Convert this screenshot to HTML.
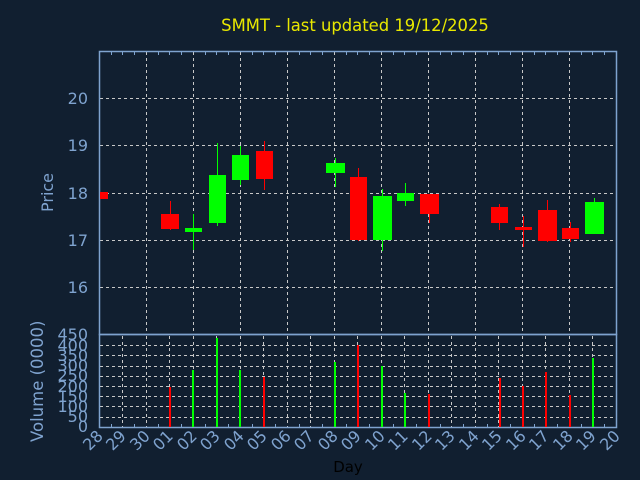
<!DOCTYPE html><html><head><style>body{margin:0;background:#111f30}svg{display:block}text{font-family:"DejaVu Sans","Liberation Sans",sans-serif}</style></head><body>
<svg width="640" height="480" xmlns="http://www.w3.org/2000/svg">
<rect width="640" height="480" fill="#111f30"/>
<text x="355" y="31" fill="#e8e800" font-size="16.4" text-anchor="middle">SMMT - last updated 19/12/2025</text>
<g stroke="#c8c8c8" stroke-dasharray="3,3" stroke-width="1">
<path d="M146.5 52V334M193.5 52V334M240.5 52V334M287.5 52V334M334.5 52V334M381.5 52V334M428.5 52V334M475.5 52V334M522.5 52V334M569.5 52V334"/>
<path d="M100 98.5H616M100 145.5H616M100 193.5H616M100 240.5H616M100 287.5H616"/>
<path d="M122.5 336V427M146.5 336V427M169.5 336V427M193.5 336V427M216.5 336V427M240.5 336V427M263.5 336V427M287.5 336V427M310.5 336V427M334.5 336V427M357.5 336V427M381.5 336V427M404.5 336V427M428.5 336V427M451.5 336V427M475.5 336V427M498.5 336V427M522.5 336V427M545.5 336V427M569.5 336V427M592.5 336V427"/>
<path d="M100 345.5H616M100 355.5H616M100 366.5H616M100 376.5H616M100 386.5H616M100 396.5H616M100 406.5H616M100 417.5H616"/>
</g>
<g stroke="#7fa3cf" fill="none" stroke-width="1.5">
<rect x="99.5" y="51.5" width="517" height="283"/>
<rect x="99.5" y="334.5" width="517" height="93"/>
</g>
<g stroke="#7fa3cf" stroke-width="1">
<path d="M111.5 52v3M122.5 52v3M134.5 52v3M158.5 52v3M169.5 52v3M181.5 52v3M205.5 52v3M216.5 52v3M228.5 52v3M252.5 52v3M263.5 52v3M275.5 52v3M299.5 52v3M310.5 52v3M322.5 52v3M346.5 52v3M357.5 52v3M369.5 52v3M393.5 52v3M404.5 52v3M416.5 52v3M440.5 52v3M451.5 52v3M463.5 52v3M487.5 52v3M498.5 52v3M510.5 52v3M534.5 52v3M545.5 52v3M557.5 52v3M581.5 52v3M592.5 52v3M604.5 52v3"/>
<path d="M111.5 427v-3M134.5 427v-3M158.5 427v-3M181.5 427v-3M205.5 427v-3M228.5 427v-3M252.5 427v-3M275.5 427v-3M299.5 427v-3M322.5 427v-3M346.5 427v-3M369.5 427v-3M393.5 427v-3M416.5 427v-3M440.5 427v-3M463.5 427v-3M487.5 427v-3M510.5 427v-3M534.5 427v-3M557.5 427v-3M581.5 427v-3M604.5 427v-3"/>
</g>
<g fill="#7fa3cf" font-size="16" text-anchor="end">
<text x="88" y="104">20</text><text x="88" y="151">19</text><text x="88" y="199">18</text><text x="88" y="246">17</text><text x="88" y="293">16</text>
</g>
<g fill="#7fa3cf" font-size="16" text-anchor="end">
<text x="88" y="340">450</text><text x="88" y="351">400</text><text x="88" y="361">350</text><text x="88" y="371">300</text><text x="88" y="381">250</text><text x="88" y="392">200</text><text x="88" y="402">150</text><text x="88" y="412">100</text><text x="88" y="422">50</text><text x="88" y="432">0</text>
</g>
<text transform="translate(53 212) rotate(-90)" fill="#7fa3cf" font-size="16">Price</text>
<text transform="translate(43 442) rotate(-90)" fill="#7fa3cf" font-size="16.5">Volume (0000)</text>
<text x="348" y="472" fill="#000" font-size="15" text-anchor="middle">Day</text>
<g fill="#7fa3cf" font-size="16" text-anchor="end">
<text transform="translate(104 437) rotate(-45)">28</text>
<text transform="translate(127 437) rotate(-45)">29</text>
<text transform="translate(151 437) rotate(-45)">30</text>
<text transform="translate(174 437) rotate(-45)">01</text>
<text transform="translate(198 437) rotate(-45)">02</text>
<text transform="translate(221 437) rotate(-45)">03</text>
<text transform="translate(245 437) rotate(-45)">04</text>
<text transform="translate(268 437) rotate(-45)">05</text>
<text transform="translate(292 437) rotate(-45)">06</text>
<text transform="translate(315 437) rotate(-45)">07</text>
<text transform="translate(339 437) rotate(-45)">08</text>
<text transform="translate(362 437) rotate(-45)">09</text>
<text transform="translate(386 437) rotate(-45)">10</text>
<text transform="translate(409 437) rotate(-45)">11</text>
<text transform="translate(433 437) rotate(-45)">12</text>
<text transform="translate(456 437) rotate(-45)">13</text>
<text transform="translate(480 437) rotate(-45)">14</text>
<text transform="translate(503 437) rotate(-45)">15</text>
<text transform="translate(527 437) rotate(-45)">16</text>
<text transform="translate(550 437) rotate(-45)">17</text>
<text transform="translate(574 437) rotate(-45)">18</text>
<text transform="translate(597 437) rotate(-45)">19</text>
<text transform="translate(621 437) rotate(-45)">20</text>
</g>
<g fill="#ff0000" stroke="#ff0000">
<rect x="100" y="192" width="8" height="7" stroke="none"/>
<path d="M170.5 201V230M264.5 141V190M358.5 168V241M429.5 214V223M499.5 204V230M523.5 216V247M547.5 200V242M570.5 222V242"/>
<rect x="161" y="214" width="18" height="15" stroke="none"/>
<rect x="256" y="151" width="17" height="28" stroke="none"/>
<rect x="350" y="177" width="17" height="63" stroke="none"/>
<rect x="420" y="194" width="19" height="20" stroke="none"/>
<rect x="491" y="207" width="17" height="16" stroke="none"/>
<rect x="515" y="227" width="17" height="3" stroke="none"/>
<rect x="538" y="210" width="19" height="31" stroke="none"/>
<rect x="562" y="228" width="17" height="11" stroke="none"/>
</g>
<g fill="#00ff00" stroke="#00ff00">
<path d="M193.5 214V250M217.5 143V226M240.5 146V185M335.5 158V187M382.5 189V251M405.5 183V206M594.5 198V203"/>
<rect x="185" y="228" width="17" height="4" stroke="none"/>
<rect x="209" y="175" width="17" height="48" stroke="none"/>
<rect x="232" y="155" width="17" height="25" stroke="none"/>
<rect x="326" y="163" width="19" height="10" stroke="none"/>
<rect x="373" y="196" width="19" height="44" stroke="none"/>
<rect x="397" y="193" width="17" height="8" stroke="none"/>
<rect x="585" y="202" width="19" height="32" stroke="none"/>
</g>
<g stroke-width="2">
<path stroke="#ff0000" d="M170 387V427M264 377V427M358 345V427M429 394V427M500 378V427M523 386V427M546 372V427M570 395V427"/>
<path stroke="#00ff00" d="M193 370V427M217 338V427M240 370V427M335 362V427M382 366V427M405 393V427M593 358V427"/>
</g>
</svg>
</body></html>
